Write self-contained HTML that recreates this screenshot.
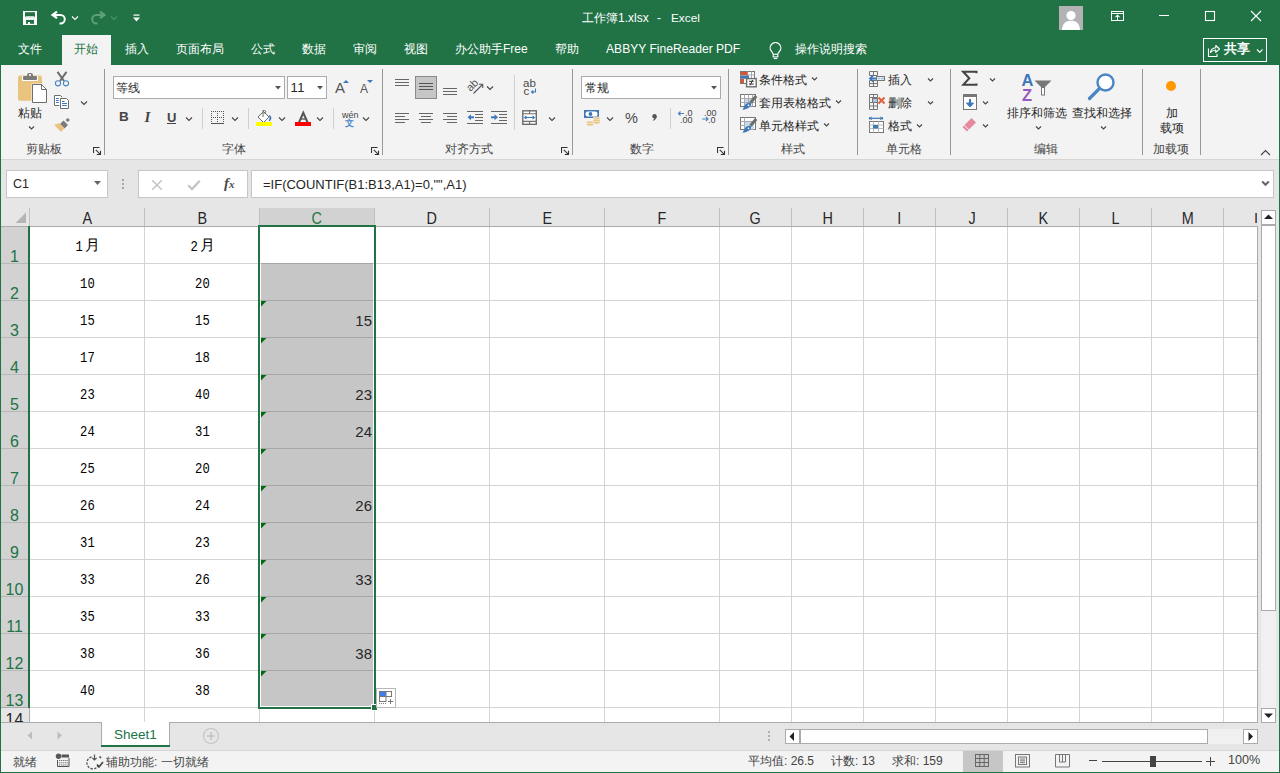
<!DOCTYPE html>
<html><head><meta charset="utf-8"><style>
html,body{margin:0;padding:0;width:1280px;height:773px;overflow:hidden;background:#f3f3f3}
body{position:relative;font-family:"Liberation Sans",sans-serif}
body>div,body>svg{position:absolute}
.t{white-space:nowrap}
.m{font-family:"Liberation Mono",monospace;font-size:14px;line-height:14px;color:#000}
.sx{display:inline-block;transform:scaleX(0.87)}
.hx{display:inline-block;transform:scaleX(0.9)}
.cj{font-family:"Liberation Sans",sans-serif;font-size:15px;display:inline-block;vertical-align:top;position:relative;top:-2px;left:1px}
</style></head><body>
<div style="left:0px;top:0px;width:1280px;height:65px;background:#217346;"></div>
<svg style="left:22px;top:10px;" width="16" height="16" viewBox="0 0 16 16"><rect x="1" y="1" width="2" height="14" fill="#fff"/><rect x="13" y="1" width="2" height="14" fill="#fff"/><rect x="1" y="1" width="14" height="1.2" fill="#fff"/><rect x="1" y="13.8" width="14" height="1.2" fill="#fff"/><rect x="1" y="7.2" width="14" height="2.7" fill="#fff"/><rect x="3" y="9.9" width="1" height="4" fill="#fff"/><rect x="12" y="9.9" width="1" height="4" fill="#fff"/><rect x="6" y="12" width="2" height="2" fill="#fff"/><path d="M3 7.2 L4 6.2 H12 L13 7.2 Z" fill="#fff"/></svg>
<svg style="left:50px;top:10px;" width="18" height="16" viewBox="0 0 18 16"><path d="M3 4.9 H10.5 A4.3 4.3 0 0 1 10.5 13.5 H9.5" fill="none" stroke="#fff" stroke-width="2"/><path d="M7 1.6 L2.6 4.9 L7 8.2" fill="none" stroke="#fff" stroke-width="2.3"/></svg>
<svg style="left:71px;top:15px;" width="8" height="6" viewBox="0 0 8 6"><path d="M1 1.5 L4.0 4.5 L7 1.5" fill="none" stroke="#fff" stroke-width="1.1"/></svg>
<svg style="left:89px;top:10px;" width="18" height="16" viewBox="0 0 18 16"><path d="M15 4.9 H7.5 A4.3 4.3 0 0 0 7.5 13.5 H8.5" fill="none" stroke="#5fa07a" stroke-width="2"/><path d="M11 1.6 L15.4 4.9 L11 8.2" fill="none" stroke="#5fa07a" stroke-width="2.3"/></svg>
<svg style="left:110px;top:15px;" width="8" height="6" viewBox="0 0 8 6"><path d="M1 1.5 L4.0 4.5 L7 1.5" fill="none" stroke="#4e9068" stroke-width="1.1"/></svg>
<svg style="left:132px;top:13px;" width="9" height="10" viewBox="0 0 9 10"><rect x="1.5" y="1.5" width="6" height="1.2" fill="#fff"/><path d="M1 4.5 H8 L4.5 8.5 Z" fill="#fff"/></svg>
<div class="t" style="left:582px;top:12px;font-size:12px;line-height:13px;color:#fff;">工作簿1.xlsx</div>
<div class="t" style="left:657px;top:12px;font-size:12px;line-height:13px;color:#fff;">-</div>
<div class="t" style="left:671px;top:12px;font-size:11.8px;line-height:13px;color:#fff;">Excel</div>
<div style="left:1059px;top:6px;width:24px;height:24px;background:#b3b3b3;"></div>
<svg style="left:1059px;top:6px;" width="24" height="24" viewBox="0 0 24 24"><circle cx="12" cy="9.5" r="4.6" fill="#fff"/><path d="M3 24 C3.5 17 7 14.8 12 14.8 C17 14.8 20.5 17 21 24 Z" fill="#fff"/></svg>
<svg style="left:1110px;top:10px;" width="16" height="13" viewBox="0 0 16 13"><rect x="1.5" y="1.5" width="12" height="9" fill="none" stroke="#fff" stroke-width="1"/><line x1="1.5" y1="3.5" x2="13.5" y2="3.5" stroke="#fff" stroke-width="1"/><path d="M7.5 10.5 V5" stroke="#fff" stroke-width="1"/><path d="M5.5 7.2 L7.5 5.2 L9.5 7.2" fill="none" stroke="#fff" stroke-width="1.1"/></svg>
<div style="left:1159px;top:15px;width:10px;height:1px;background:#fff;"></div>
<svg style="left:1204px;top:10px;" width="12" height="12" viewBox="0 0 12 12"><rect x="1.5" y="1.5" width="9" height="9" fill="none" stroke="#fff" stroke-width="1.1"/></svg>
<svg style="left:1250px;top:10px;" width="12" height="12" viewBox="0 0 12 12"><path d="M1 1 L11 11 M11 1 L1 11" stroke="#fff" stroke-width="1.1"/></svg>
<div style="left:62px;top:35px;width:49px;height:30px;background:#f3f3f3;"></div>
<div class="t" style="left:18px;top:43px;font-size:12px;line-height:12px;color:#fff;">文件</div>
<div class="t" style="left:74px;top:43px;font-size:12px;line-height:12px;color:#217346;">开始</div>
<div class="t" style="left:125px;top:43px;font-size:12px;line-height:12px;color:#fff;">插入</div>
<div class="t" style="left:176px;top:43px;font-size:12px;line-height:12px;color:#fff;">页面布局</div>
<div class="t" style="left:251px;top:43px;font-size:12px;line-height:12px;color:#fff;">公式</div>
<div class="t" style="left:302px;top:43px;font-size:12px;line-height:12px;color:#fff;">数据</div>
<div class="t" style="left:353px;top:43px;font-size:12px;line-height:12px;color:#fff;">审阅</div>
<div class="t" style="left:404px;top:43px;font-size:12px;line-height:12px;color:#fff;">视图</div>
<div class="t" style="left:455px;top:43px;font-size:12px;line-height:12px;color:#fff;">办公助手Free</div>
<div class="t" style="left:555px;top:43px;font-size:12px;line-height:12px;color:#fff;">帮助</div>
<div class="t" style="left:606px;top:42px;font-size:12.1px;line-height:14px;color:#fff;">ABBYY FineReader PDF</div>
<svg style="left:768px;top:42px;" width="15" height="18" viewBox="0 0 15 18"><path d="M5.3 12 L3.4 9.2 A5.3 5.3 0 1 1 11.6 9.2 L9.7 12" fill="none" stroke="#fff" stroke-width="1.2"/><rect x="5.2" y="12.3" width="4.6" height="2.6" fill="none" stroke="#fff" stroke-width="1.1"/><rect x="5.8" y="16" width="3.4" height="1.1" fill="#fff"/></svg>
<div class="t" style="left:795px;top:43px;font-size:12px;line-height:12px;color:#fff;">操作说明搜索</div>
<div style="left:1203px;top:38px;width:64px;height:24px;border:1px solid #fff;box-sizing:border-box;"></div>
<svg style="left:1206px;top:43px;" width="15" height="15" viewBox="0 0 15 15"><path d="M2.5 5.5 V13.5 H11 V11" fill="none" stroke="#fff" stroke-width="1.1"/><path d="M4.5 9.5 C4.8 6.5 7 5 9.8 4.8 V2.5 L13.5 6 L9.8 9.3 V7 C7.5 7 6 7.8 4.5 9.5 Z" fill="none" stroke="#fff" stroke-width="1.1" stroke-linejoin="round"/></svg>
<div class="t" style="left:1224px;top:42px;font-size:13px;line-height:13px;color:#fff;font-weight:bold;">共享</div>
<svg style="left:1256px;top:48px;" width="7.5" height="5" viewBox="0 0 7.5 5"><path d="M1 1.5 L3.75 4.3 L6.5 1.5" fill="none" stroke="#fff" stroke-width="1.1"/></svg>
<div style="left:0px;top:65px;width:1280px;height:94px;background:#f3f3f3;"></div>
<div style="left:0px;top:159px;width:1280px;height:1px;background:#d6d6d6;"></div>
<div style="left:104px;top:69px;width:1px;height:86px;background:#999999;"></div>
<div style="left:382px;top:69px;width:1px;height:86px;background:#999999;"></div>
<div style="left:572px;top:69px;width:1px;height:86px;background:#999999;"></div>
<div style="left:728px;top:69px;width:1px;height:86px;background:#999999;"></div>
<div style="left:857px;top:69px;width:1px;height:86px;background:#999999;"></div>
<div style="left:950px;top:69px;width:1px;height:86px;background:#999999;"></div>
<div style="left:1142px;top:69px;width:1px;height:86px;background:#999999;"></div>
<div style="left:1200px;top:69px;width:1px;height:86px;background:#999999;"></div>
<div class="t" style="left:26px;top:143px;font-size:12px;line-height:12px;color:#444;">剪贴板</div>
<div class="t" style="left:222px;top:143px;font-size:12px;line-height:12px;color:#444;">字体</div>
<div class="t" style="left:445px;top:143px;font-size:12px;line-height:12px;color:#444;">对齐方式</div>
<div class="t" style="left:630px;top:143px;font-size:12px;line-height:12px;color:#444;">数字</div>
<div class="t" style="left:781px;top:143px;font-size:12px;line-height:12px;color:#444;">样式</div>
<div class="t" style="left:886px;top:143px;font-size:12px;line-height:12px;color:#444;">单元格</div>
<div class="t" style="left:1034px;top:143px;font-size:12px;line-height:12px;color:#444;">编辑</div>
<div class="t" style="left:1153px;top:143px;font-size:12px;line-height:12px;color:#444;">加载项</div>
<svg style="left:93px;top:147px;" width="9" height="9" viewBox="0 0 9 9"><path d="M0.5 6 V0.5 H6.5 M2.8 2.8 L7.3 7.3 M7.5 3.8 V7.5 H3.8" fill="none" stroke="#333" stroke-width="1.1"/></svg>
<svg style="left:371px;top:147px;" width="9" height="9" viewBox="0 0 9 9"><path d="M0.5 6 V0.5 H6.5 M2.8 2.8 L7.3 7.3 M7.5 3.8 V7.5 H3.8" fill="none" stroke="#333" stroke-width="1.1"/></svg>
<svg style="left:561px;top:147px;" width="9" height="9" viewBox="0 0 9 9"><path d="M0.5 6 V0.5 H6.5 M2.8 2.8 L7.3 7.3 M7.5 3.8 V7.5 H3.8" fill="none" stroke="#333" stroke-width="1.1"/></svg>
<svg style="left:717px;top:147px;" width="9" height="9" viewBox="0 0 9 9"><path d="M0.5 6 V0.5 H6.5 M2.8 2.8 L7.3 7.3 M7.5 3.8 V7.5 H3.8" fill="none" stroke="#333" stroke-width="1.1"/></svg>
<svg style="left:1260px;top:149px;" width="11" height="7" viewBox="0 0 11 7"><path d="M1 6 L5.5 1.5 L10 6" fill="none" stroke="#444" stroke-width="1.1"/></svg>
<svg style="left:17px;top:72px;" width="31" height="32" viewBox="0 0 31 32"><rect x="1" y="3.6" width="24" height="25.2" rx="2" fill="#e9c47e"/><rect x="5" y="4" width="16" height="5" fill="#fff"/><rect x="6" y="4" width="14" height="4" rx="1" fill="#7a7a7a"/><rect x="10" y="1" width="6" height="4.5" rx="2.2" fill="#7a7a7a"/><circle cx="13" cy="3" r="1.1" fill="#fff"/><path d="M14.5 11.5 H25 L30.5 17 V31.5 H14.5 Z" fill="#f3f3f3"/><path d="M15.5 12.5 H24.5 L29.5 17.5 V30.5 H15.5 Z" fill="#fff" stroke="#6d6d6d" stroke-width="1"/><path d="M24.5 12.5 V17.5 H29.5" fill="none" stroke="#6d6d6d" stroke-width="1"/></svg>
<div class="t" style="left:18px;top:107px;font-size:12px;line-height:12px;color:#262626;">粘贴</div>
<svg style="left:28px;top:125px;" width="7" height="5" viewBox="0 0 7 5"><path d="M1 1.5 L3.5 4.0 L6 1.5" fill="none" stroke="#444" stroke-width="1.1"/></svg>
<svg style="left:54px;top:71px;" width="16" height="16" viewBox="0 0 16 16"><path d="M3.5 0.8 L10 10 M12.5 0.8 L6 10" stroke="#6d6d6d" stroke-width="2"/><circle cx="4" cy="12.3" r="2.6" fill="#f3f3f3" stroke="#4a86c5" stroke-width="1.1"/><circle cx="12" cy="12.3" r="2.6" fill="#f3f3f3" stroke="#4a86c5" stroke-width="1.1"/></svg>
<svg style="left:50px;top:90px;" width="24" height="22" viewBox="0 0 24 22"><path d="M4.5 5.5 H10.5 L12 7 V15.5 H4.5 Z" fill="#fff" stroke="#6d6d6d" stroke-width="1"/><path d="M10.5 8.5 H16.5 L18.5 10.5 V18.5 H10.5 Z" fill="#fff" stroke="#f3f3f3" stroke-width="2.5"/><path d="M10.5 8.5 H16.5 L18.5 10.5 V18.5 H10.5 Z" fill="#fff" stroke="#6d6d6d" stroke-width="1"/><path d="M6 8.5 H8.8 M6 10.5 H8.8 M6 12.5 H8.8 M12 11.5 H14.5 M12 13.5 H17 M12 15.5 H17" stroke="#3e78b9" stroke-width="1"/></svg>
<svg style="left:80px;top:100px;" width="8" height="6" viewBox="0 0 8 6"><path d="M1 1.5 L4.0 4.5 L7 1.5" fill="none" stroke="#444" stroke-width="1.1"/></svg>
<svg style="left:50px;top:116px;" width="24" height="20" viewBox="0 0 24 20"><polygon points="15.6,4 17.8,1.9 19.9,4 17.8,6.1" fill="#7a7a7a"/><polygon points="10,8 13.5,4.5 18,9 14.5,12.5" fill="#7a7a7a"/><polygon points="4,8.8 9.5,7.3 14.5,12.3 11,16" fill="#e9c47e"/></svg>
<div style="left:113px;top:76px;width:172px;height:23px;background:#fff;border:1px solid #ababab;box-sizing:border-box;"></div>
<div class="t" style="left:116px;top:82px;font-size:12px;line-height:12px;color:#262626;">等线</div>
<svg style="left:275px;top:86px;" width="6" height="4" viewBox="0 0 6 4"><path d="M0 0 H6 L3 3.5 Z" fill="#555"/></svg>
<div style="left:287px;top:76px;width:40px;height:23px;background:#fff;border:1px solid #ababab;box-sizing:border-box;"></div>
<div class="t" style="left:290.5px;top:81px;font-size:13px;line-height:13px;color:#262626;letter-spacing:0.5px;">11</div>
<svg style="left:317px;top:86px;" width="6" height="4" viewBox="0 0 6 4"><path d="M0 0 H6 L3 3.5 Z" fill="#555"/></svg>
<div class="t" style="left:335px;top:80px;font-size:15px;line-height:15px;color:#555;">A</div>
<svg style="left:343px;top:80px;" width="6" height="4" viewBox="0 0 6 4"><path d="M0 3 L3 0 L6 3 Z" fill="#3e78b9"/></svg>
<div class="t" style="left:360px;top:83px;font-size:12px;line-height:12px;color:#555;">A</div>
<svg style="left:366.5px;top:80px;" width="6" height="4" viewBox="0 0 6 4"><path d="M0 0 H6 L3 3 Z" fill="#3e78b9"/></svg>
<div class="t" style="left:119px;top:110px;font-size:13.5px;line-height:14px;color:#444;font-weight:bold;">B</div>
<div class="t" style="left:144.5px;top:110px;font-size:15px;line-height:15px;color:#444;font-family:'Liberation Serif';font-style:italic;font-weight:bold;">I</div>
<div class="t" style="left:167px;top:111px;font-size:13px;line-height:13px;color:#444;font-weight:bold;">U</div>
<div style="left:167px;top:123px;width:9px;height:1px;background:#444;"></div>
<svg style="left:185px;top:116px;" width="8" height="6" viewBox="0 0 8 6"><path d="M1 1.5 L4.0 4.5 L7 1.5" fill="none" stroke="#444" stroke-width="1.1"/></svg>
<div style="left:202px;top:108px;width:1px;height:21px;background:#d0d0d0;"></div>
<svg style="left:211px;top:110px;" width="14" height="15" viewBox="0 0 14 15"><g fill="#555"><rect x="0" y="1" width="1" height="1"/><rect x="0" y="11" width="1" height="1"/><rect x="0" y="3" width="1" height="1"/><rect x="0" y="5" width="1" height="1"/><rect x="0" y="7" width="1" height="1"/><rect x="0" y="9" width="1" height="1"/><rect x="10" y="1" width="1" height="1"/><rect x="10" y="7" width="1" height="1"/><rect x="12" y="1" width="1" height="1"/><rect x="12" y="11" width="1" height="1"/><rect x="12" y="3" width="1" height="1"/><rect x="12" y="5" width="1" height="1"/><rect x="12" y="7" width="1" height="1"/><rect x="12" y="9" width="1" height="1"/><rect x="2" y="1" width="1" height="1"/><rect x="2" y="7" width="1" height="1"/><rect x="4" y="1" width="1" height="1"/><rect x="4" y="7" width="1" height="1"/><rect x="6" y="1" width="1" height="1"/><rect x="6" y="11" width="1" height="1"/><rect x="6" y="3" width="1" height="1"/><rect x="6" y="5" width="1" height="1"/><rect x="6" y="7" width="1" height="1"/><rect x="6" y="9" width="1" height="1"/><rect x="8" y="1" width="1" height="1"/><rect x="8" y="7" width="1" height="1"/></g><rect x="0" y="13" width="13" height="1" fill="#555"/></svg>
<svg style="left:231px;top:116px;" width="8" height="6" viewBox="0 0 8 6"><path d="M1 1.5 L4.0 4.5 L7 1.5" fill="none" stroke="#444" stroke-width="1.1"/></svg>
<div style="left:248px;top:108px;width:1px;height:21px;background:#d0d0d0;"></div>
<svg style="left:255px;top:109px;" width="18" height="18" viewBox="0 0 18 18"><path d="M8.5 2.5 L14 8 L8.5 13.5 L3 8 Z" fill="#fff" stroke="#6d6d6d" stroke-width="1"/><path d="M8 8 V1.5 H9.5 C11 1.5 11 4 9.5 4 H8.5" fill="none" stroke="#6d6d6d" stroke-width="1"/><path d="M13.8 12 C14.5 10 15 8 13.8 6 C16.5 6.5 17.5 9.5 14.8 12.2 Z" fill="#3e78b9"/><rect x="1" y="13" width="16" height="4" fill="#ffff00"/></svg>
<svg style="left:278px;top:116px;" width="8" height="6" viewBox="0 0 8 6"><path d="M1 1.5 L4.0 4.5 L7 1.5" fill="none" stroke="#444" stroke-width="1.1"/></svg>
<svg style="left:294px;top:110px;" width="18" height="13" viewBox="0 0 18 13"><path d="M5 12.5 L9.3 2.8 L13.6 12.5" fill="none" stroke="#555" stroke-width="2" stroke-linejoin="miter"/><path d="M6.5 9 H12" stroke="#555" stroke-width="1.3"/></svg>
<div style="left:295px;top:122px;width:16px;height:4px;background:#ff0000;"></div>
<svg style="left:316px;top:116px;" width="8" height="6" viewBox="0 0 8 6"><path d="M1 1.5 L4.0 4.5 L7 1.5" fill="none" stroke="#444" stroke-width="1.1"/></svg>
<div style="left:333px;top:108px;width:1px;height:21px;background:#d0d0d0;"></div>
<div class="t" style="left:342px;top:111px;font-size:9px;line-height:9px;color:#444;">wén</div>
<div class="t" style="left:345px;top:119px;font-size:9px;line-height:9px;color:#4a86c5;font-weight:bold;">文</div>
<svg style="left:362px;top:116px;" width="8" height="6" viewBox="0 0 8 6"><path d="M1 1.5 L4.0 4.5 L7 1.5" fill="none" stroke="#444" stroke-width="1.1"/></svg>
<div style="left:395px;top:79px;width:14px;height:1px;background:#666;"></div>
<div style="left:395px;top:82px;width:14px;height:1px;background:#666;"></div>
<div style="left:395px;top:85px;width:14px;height:1px;background:#666;"></div>
<div style="left:415px;top:76px;width:22px;height:23px;background:#c6c6c6;border:1px solid #8a8a8a;box-sizing:border-box;"></div>
<div style="left:419px;top:83px;width:14px;height:1px;background:#555;"></div>
<div style="left:419px;top:86px;width:14px;height:1px;background:#555;"></div>
<div style="left:419px;top:89px;width:14px;height:1px;background:#555;"></div>
<div style="left:443px;top:88px;width:14px;height:1px;background:#666;"></div>
<div style="left:443px;top:91px;width:14px;height:1px;background:#666;"></div>
<div style="left:443px;top:94px;width:14px;height:1px;background:#666;"></div>
<svg style="left:465px;top:77px;" width="20" height="19" viewBox="0 0 20 19"><text x="0" y="0" font-size="11" font-family="Liberation Sans" fill="#555" transform="translate(5.5 15) rotate(-45)">ab</text><path d="M8.5 16.5 L17.5 7.5" stroke="#555" stroke-width="1.1"/><path d="M14 7.3 H17.7 V11" fill="none" stroke="#555" stroke-width="1.1"/></svg>
<svg style="left:486px;top:85px;" width="8" height="6" viewBox="0 0 8 6"><path d="M1 1.5 L4.0 4.5 L7 1.5" fill="none" stroke="#444" stroke-width="1.1"/></svg>
<div style="left:514px;top:75px;width:1px;height:55px;background:#d0d0d0;"></div>
<div class="t" style="left:523px;top:78px;font-size:11.5px;line-height:11px;color:#4a4a4a;">ab</div>
<div class="t" style="left:523.5px;top:86px;font-size:11.5px;line-height:11px;color:#4a4a4a;">c</div>
<svg style="left:530px;top:88px;" width="7" height="7" viewBox="0 0 7 7"><path d="M5.5 0.5 V4 H2 M3.3 2.5 L1.5 4 L3.3 5.5" fill="none" stroke="#3e78b9" stroke-width="1.1"/></svg>
<div style="left:395px;top:113px;width:14px;height:1px;background:#666;"></div>
<div style="left:395px;top:116px;width:10px;height:1px;background:#666;"></div>
<div style="left:395px;top:119px;width:14px;height:1px;background:#666;"></div>
<div style="left:395px;top:122px;width:10px;height:1px;background:#666;"></div>
<div style="left:419px;top:113px;width:14px;height:1px;background:#666;"></div>
<div style="left:421px;top:116px;width:10px;height:1px;background:#666;"></div>
<div style="left:419px;top:119px;width:14px;height:1px;background:#666;"></div>
<div style="left:421px;top:122px;width:10px;height:1px;background:#666;"></div>
<div style="left:443px;top:113px;width:14px;height:1px;background:#666;"></div>
<div style="left:447px;top:116px;width:10px;height:1px;background:#666;"></div>
<div style="left:443px;top:119px;width:14px;height:1px;background:#666;"></div>
<div style="left:447px;top:122px;width:10px;height:1px;background:#666;"></div>
<svg style="left:467px;top:110px;" width="17" height="15" viewBox="0 0 17 15"><path d="M0 1.5 H16 M8 4.5 H16 M8 7.5 H16 M8 10.5 H16 M0 13.5 H16" stroke="#666" stroke-width="1"/><path d="M7 7.3 H3" stroke="#3e78b9" stroke-width="2"/><path d="M0.5 7.3 L4 4.3 V10.3 Z" fill="#3e78b9"/></svg>
<svg style="left:491px;top:110px;" width="17" height="15" viewBox="0 0 17 15"><path d="M0 1.5 H16 M8 4.5 H16 M8 7.5 H16 M8 10.5 H16 M0 13.5 H16" stroke="#666" stroke-width="1"/><path d="M0 7.3 H4" stroke="#3e78b9" stroke-width="2"/><path d="M7 7.3 L3.5 4.3 V10.3 Z" fill="#3e78b9"/></svg>
<svg style="left:521px;top:109px;" width="17" height="17" viewBox="0 0 17 17"><rect x="1.8" y="1.8" width="13.5" height="13.5" fill="#fff" stroke="#6d6d6d" stroke-width="1.4"/><path d="M1.5 4.7 H15.5 M1.5 12.4 H15.5 M8.6 1.5 V4.7 M8.6 12.4 V15.5" stroke="#6d6d6d" stroke-width="1.1"/><path d="M4 8.5 H13 " stroke="#3e78b9" stroke-width="1.1"/><path d="M5.5 6.8 L3.6 8.5 L5.5 10.2 M11.5 6.8 L13.4 8.5 L11.5 10.2" fill="none" stroke="#3e78b9" stroke-width="1.1"/></svg>
<svg style="left:548px;top:116px;" width="8" height="6" viewBox="0 0 8 6"><path d="M1 1.5 L4.0 4.5 L7 1.5" fill="none" stroke="#444" stroke-width="1.1"/></svg>
<div style="left:581px;top:76px;width:140px;height:23px;background:#fff;border:1px solid #ababab;box-sizing:border-box;"></div>
<div class="t" style="left:585px;top:82px;font-size:12px;line-height:12px;color:#262626;">常规</div>
<svg style="left:711px;top:86px;" width="6" height="4" viewBox="0 0 6 4"><path d="M0 0 H6 L3 3.5 Z" fill="#555"/></svg>
<svg style="left:583px;top:109px;" width="18" height="18" viewBox="0 0 18 18"><rect x="1" y="1" width="15" height="8" fill="#3e78b9"/><rect x="2.5" y="2.5" width="12" height="5" rx="2.2" fill="#fff"/><circle cx="7.5" cy="5" r="1.9" fill="#3e78b9"/><g fill="#e9c47e" stroke="#f3f3f3" stroke-width="0.6"><ellipse cx="13.5" cy="9.2" rx="3.6" ry="1.4"/><ellipse cx="13.5" cy="11.4" rx="3.6" ry="1.4"/><ellipse cx="13.5" cy="13.6" rx="3.6" ry="1.4"/><ellipse cx="7" cy="13.4" rx="3.6" ry="1.4"/><ellipse cx="7" cy="15.6" rx="3.6" ry="1.4"/></g></svg>
<svg style="left:606px;top:116px;" width="8" height="6" viewBox="0 0 8 6"><path d="M1 1.5 L4.0 4.5 L7 1.5" fill="none" stroke="#444" stroke-width="1.1"/></svg>
<div class="t" style="left:625px;top:111px;font-size:14.5px;line-height:14px;color:#4a4a4a;">%</div>
<svg style="left:650px;top:112px;" width="9" height="10" viewBox="0 0 9 10"><circle cx="4.5" cy="4.2" r="2.2" fill="#555"/><path d="M6.6 4 C6.8 6.2 5.8 7.8 3.2 8.8 L2.8 8 C4.3 7.2 4.8 6.3 4.6 5.2 Z" fill="#555"/></svg>
<div style="left:670px;top:108px;width:1px;height:21px;background:#d0d0d0;"></div>
<svg style="left:677px;top:110px;" width="16" height="15" viewBox="0 0 16 15"><path d="M7 3.5 H1.5 M3.5 1.5 L1.5 3.5 L3.5 5.5" fill="none" stroke="#4a86c5" stroke-width="1.2"/></svg>
<div class="t" style="left:685px;top:109px;font-size:9px;line-height:9px;color:#444;">.0</div>
<div class="t" style="left:680px;top:116px;font-size:9px;line-height:9px;color:#444;">.00</div>
<div class="t" style="left:704px;top:109px;font-size:9px;line-height:9px;color:#444;">.00</div>
<svg style="left:701px;top:115px;" width="8" height="8" viewBox="0 0 8 8"><path d="M1 4 H7 M5 2 L7 4 L5 6" fill="none" stroke="#4a86c5" stroke-width="1.2"/></svg>
<div class="t" style="left:708px;top:116px;font-size:9px;line-height:9px;color:#444;">.0</div>
<svg style="left:739px;top:70px;" width="19" height="18" viewBox="0 0 19 18"><rect x="1.5" y="1.5" width="14" height="12" fill="#fff" stroke="#777"/><path d="M8.5 1.5 V13.5 M12.5 1.5 V13.5 M1.5 5 H15.5 M1.5 8.5 H15.5" stroke="#aaa"/><rect x="2" y="2" width="6.5" height="3" fill="#e0532f"/><rect x="2" y="5.5" width="8" height="3" fill="#3e78b9"/><rect x="2" y="9" width="3" height="4" fill="#e0532f"/><rect x="7.6" y="8.6" width="9.6" height="8.2" fill="#fff" stroke="#6d6d6d" stroke-width="1.4"/><path d="M10 11.3 H14.8 M10 14 H14.8 M13.6 10 L11.2 15.3" stroke="#333" stroke-width="1"/></svg>
<div class="t" style="left:759px;top:74px;font-size:12px;line-height:12px;color:#262626;">条件格式</div>
<svg style="left:811px;top:76px;" width="7" height="5" viewBox="0 0 7 5"><path d="M1 1.5 L3.5 4.0 L6 1.5" fill="none" stroke="#444" stroke-width="1.1"/></svg>
<svg style="left:739px;top:93px;" width="19" height="18" viewBox="0 0 19 18"><rect x="1.5" y="1.5" width="15" height="12" fill="#fff" stroke="#777"/><rect x="5.5" y="5.5" width="7" height="8" fill="#c5d9ef"/><path d="M5.5 1.5 V13.5 M9.5 1.5 V13.5 M13.5 1.5 V13.5 M1.5 5.5 H16.5 M1.5 9.5 H16.5" stroke="#aaa"/><path d="M17.2 3 L11.5 9.8" stroke="#6d6d6d" stroke-width="3"/><path d="M11.5 10 C9.5 9.3 7.2 10.3 5.8 12.5 L3.5 16.8 C6.3 16.8 9.5 15.6 11.3 13.6 C12.3 12.5 12.4 11 11.5 10 Z" fill="#3e78b9"/><circle cx="9.5" cy="12.3" r="0.9" fill="#fff"/></svg>
<div class="t" style="left:759px;top:97px;font-size:12px;line-height:12px;color:#262626;">套用表格格式</div>
<svg style="left:835px;top:99px;" width="7" height="5" viewBox="0 0 7 5"><path d="M1 1.5 L3.5 4.0 L6 1.5" fill="none" stroke="#444" stroke-width="1.1"/></svg>
<svg style="left:739px;top:116px;" width="19" height="18" viewBox="0 0 19 18"><rect x="1.5" y="1.5" width="15" height="12" fill="#fff" stroke="#777"/><path d="M1.5 5.5 H16.5 M1.5 9.5 H5.5 M5.5 1.5 V13.5" stroke="#aaa"/><rect x="6" y="6" width="9" height="7.5" fill="#c5d9ef"/><path d="M17.2 3 L11.5 9.8" stroke="#6d6d6d" stroke-width="3"/><path d="M11.5 10 C9.5 9.3 7.2 10.3 5.8 12.5 L3.5 16.8 C6.3 16.8 9.5 15.6 11.3 13.6 C12.3 12.5 12.4 11 11.5 10 Z" fill="#3e78b9"/><circle cx="9.5" cy="12.3" r="0.9" fill="#fff"/></svg>
<div class="t" style="left:759px;top:120px;font-size:12px;line-height:12px;color:#262626;">单元格样式</div>
<svg style="left:823px;top:122px;" width="7" height="5" viewBox="0 0 7 5"><path d="M1 1.5 L3.5 4.0 L6 1.5" fill="none" stroke="#444" stroke-width="1.1"/></svg>
<svg style="left:868px;top:70px;" width="18" height="18" viewBox="0 0 18 18"><path d="M1.5 1.5 H9.5 V5.5 H1.5 Z M5.5 1.5 V5.5 M1.5 10.5 H9.5 V16.5 H1.5 Z M1.5 13.5 H9.5 M5.5 10.5 V16.5" fill="none" stroke="#777"/><rect x="8.5" y="6.5" width="8" height="4" fill="#fff" stroke="#777"/><rect x="9.5" y="7.5" width="3" height="2" fill="#a9c8e8"/><rect x="13" y="7.5" width="3" height="2" fill="#a9c8e8"/><path d="M8 8.5 H2.5" stroke="#3e78b9" stroke-width="2"/><path d="M5.2 5.3 L2 8.5 L5.2 11.7" fill="none" stroke="#3e78b9" stroke-width="1.8"/></svg>
<div class="t" style="left:888px;top:74px;font-size:12px;line-height:12px;color:#262626;">插入</div>
<svg style="left:927px;top:77px;" width="7" height="5" viewBox="0 0 7 5"><path d="M1 1.5 L3.5 4.0 L6 1.5" fill="none" stroke="#444" stroke-width="1.1"/></svg>
<svg style="left:868px;top:93px;" width="18" height="18" viewBox="0 0 18 18"><path d="M1.5 1.5 H9.5 V4.5 H1.5 Z M5.5 1.5 V4.5 M1.5 9.5 H9.5 V16.5 H1.5 Z M1.5 13 H9.5 M5.5 9.5 V16.5 M1.5 4.5 V9.5" fill="none" stroke="#777"/><rect x="4.5" y="5.5" width="5" height="4" fill="#a9c8e8" stroke="#777"/><path d="M10.5 4.5 L16.5 10.5 M16.5 4.5 L10.5 10.5" stroke="#e0613f" stroke-width="2"/></svg>
<div class="t" style="left:888px;top:97px;font-size:12px;line-height:12px;color:#262626;">删除</div>
<svg style="left:927px;top:100px;" width="7" height="5" viewBox="0 0 7 5"><path d="M1 1.5 L3.5 4.0 L6 1.5" fill="none" stroke="#444" stroke-width="1.1"/></svg>
<svg style="left:868px;top:116px;" width="18" height="18" viewBox="0 0 18 18"><path d="M1.5 1 V3.5 M14.5 1 V3.5" stroke="#3e78b9"/><path d="M2 2.3 H14" stroke="#3e78b9" stroke-width="1.2"/><path d="M3.8 0.8 L2 2.3 L3.8 3.8 M12.2 0.8 L14 2.3 L12.2 3.8" fill="none" stroke="#3e78b9" stroke-width="1"/><rect x="1.5" y="5.5" width="14" height="11" fill="#fff" stroke="#777"/><path d="M1.5 9 H15.5 M1.5 12.5 H15.5 M5.5 5.5 V16.5 M10.5 5.5 V16.5" stroke="#bbb"/><rect x="5" y="9" width="5" height="3.5" fill="#3e78b9"/></svg>
<div class="t" style="left:888px;top:120px;font-size:12px;line-height:12px;color:#262626;">格式</div>
<svg style="left:916px;top:123px;" width="7" height="5" viewBox="0 0 7 5"><path d="M1 1.5 L3.5 4.0 L6 1.5" fill="none" stroke="#444" stroke-width="1.1"/></svg>
<svg style="left:961px;top:70px;" width="17" height="17" viewBox="0 0 17 17"><path d="M15.5 3.2 V1.8 H2.2 L8.3 8.3 L2.2 14.8 H15.5 V13.4" fill="none" stroke="#444" stroke-width="2" stroke-linejoin="miter"/></svg>
<svg style="left:989px;top:77px;" width="7" height="5" viewBox="0 0 7 5"><path d="M1 1.5 L3.5 4.0 L6 1.5" fill="none" stroke="#444" stroke-width="1.1"/></svg>
<svg style="left:962px;top:93px;" width="16" height="18" viewBox="0 0 16 18"><rect x="1.5" y="1.5" width="13" height="15" fill="#fff" stroke="#777"/><rect x="1" y="1" width="14" height="3" fill="#777"/><path d="M8 6 V12" stroke="#3e78b9" stroke-width="2"/><path d="M4.5 10 L8 14 L11.5 10 Z" fill="#3e78b9" stroke="#3e78b9" stroke-width="1"/></svg>
<svg style="left:982px;top:100px;" width="7" height="5" viewBox="0 0 7 5"><path d="M1 1.5 L3.5 4.0 L6 1.5" fill="none" stroke="#444" stroke-width="1.1"/></svg>
<svg style="left:962px;top:117px;" width="15" height="15" viewBox="0 0 15 15"><path d="M9.5 1 L14 5.5 L7 12.5 L2.5 8 Z" fill="#e58a9e"/><path d="M2 8.5 L6.5 13 L5 14.5 L0.5 10 Z" fill="#e58a9e"/></svg>
<svg style="left:982px;top:123px;" width="7" height="5" viewBox="0 0 7 5"><path d="M1 1.5 L3.5 4.0 L6 1.5" fill="none" stroke="#444" stroke-width="1.1"/></svg>
<div class="t" style="left:1021.5px;top:72px;font-size:16.5px;line-height:16px;color:#3e78b9;font-weight:bold;">A</div>
<div class="t" style="left:1022px;top:87px;font-size:16.5px;line-height:16px;color:#9b59c0;font-weight:bold;">Z</div>
<svg style="left:1034px;top:80px;" width="18" height="16" viewBox="0 0 18 16"><path d="M0.5 0.5 H17.5 L11 7 V15.5 H7 V7 Z" fill="#777"/><path d="M8 8 V14.5 H10 V8" fill="#fff"/></svg>
<div class="t" style="left:1007px;top:107px;font-size:12px;line-height:12px;color:#262626;">排序和筛选</div>
<svg style="left:1035px;top:125px;" width="7" height="5" viewBox="0 0 7 5"><path d="M1 1.5 L3.5 4.0 L6 1.5" fill="none" stroke="#444" stroke-width="1.1"/></svg>
<svg style="left:1087px;top:72px;" width="30" height="30" viewBox="0 0 30 30"><circle cx="18.5" cy="10.5" r="8" fill="#fff" stroke="#4a86c5" stroke-width="2.4"/><path d="M12.5 16.5 L2.5 26.5" stroke="#4a86c5" stroke-width="3.2" stroke-linecap="round"/></svg>
<div class="t" style="left:1072px;top:107px;font-size:12px;line-height:12px;color:#262626;">查找和选择</div>
<svg style="left:1100px;top:125px;" width="7" height="5" viewBox="0 0 7 5"><path d="M1 1.5 L3.5 4.0 L6 1.5" fill="none" stroke="#444" stroke-width="1.1"/></svg>
<svg style="left:1165px;top:80px;" width="12" height="12" viewBox="0 0 12 12"><circle cx="6" cy="6" r="5" fill="#ff9900"/></svg>
<div class="t" style="left:1166px;top:107px;font-size:12px;line-height:12px;color:#262626;">加</div>
<div class="t" style="left:1160px;top:122px;font-size:12px;line-height:12px;color:#262626;">载项</div>
<div style="left:0px;top:160px;width:1280px;height:48px;background:#e6e6e6;"></div>
<div style="left:6px;top:170px;width:102px;height:28px;background:#fff;border:1px solid #c6c6c6;box-sizing:border-box;"></div>
<div class="t" style="left:13px;top:178px;font-size:12.5px;line-height:13px;color:#262626;">C1</div>
<svg style="left:94px;top:181px;" width="8" height="5" viewBox="0 0 8 5"><path d="M0 0 H7 L3.5 4 Z" fill="#666"/></svg>
<div style="left:122px;top:179px;width:2px;height:2px;background:#a8a8a8;"></div>
<div style="left:122px;top:183px;width:2px;height:2px;background:#a8a8a8;"></div>
<div style="left:122px;top:187px;width:2px;height:2px;background:#a8a8a8;"></div>
<div style="left:138px;top:170px;width:110px;height:28px;background:#fff;border:1px solid #c6c6c6;box-sizing:border-box;"></div>
<svg style="left:151px;top:179px;" width="12" height="12" viewBox="0 0 12 12"><path d="M1.2 1.2 L10.8 10.8 M10.8 1.2 L1.2 10.8" stroke="#c4c4c4" stroke-width="1.6"/></svg>
<svg style="left:187px;top:179px;" width="14" height="12" viewBox="0 0 14 12"><path d="M1.2 6.3 L5 10 L12.8 1.8" fill="none" stroke="#c4c4c4" stroke-width="2.3"/></svg>
<div class="t" style="left:224px;top:175.5px;font-size:15px;line-height:14px;color:#4d4d4d;font-family:'Liberation Serif';font-weight:bold;"><i>f</i><span style="font-size:11px"><i>x</i></span></div>
<div style="left:251px;top:170px;width:1023px;height:28px;background:#fff;border:1px solid #c6c6c6;box-sizing:border-box;"></div>
<div class="t" style="left:263px;top:177px;font-size:13px;line-height:15px;color:#262626;">=IF(COUNTIF(B1:B13,A1)=0,"",A1)</div>
<svg style="left:1261px;top:180px;" width="9" height="7" viewBox="0 0 9 7"><path d="M1.2 1.5 L4.5 4.8 L7.8 1.5" fill="none" stroke="#666" stroke-width="2"/></svg>
<div style="left:0px;top:208px;width:1261px;height:19px;background:#e6e6e6;"></div>
<div style="left:0px;top:227px;width:1261px;height:495px;background:#fff;"></div>
<div style="left:260px;top:208px;width:114px;height:18px;background:#d2d2d2;"></div>
<div style="left:0px;top:227px;width:29px;height:495px;background:#e6e6e6;"></div>
<div style="left:0px;top:227px;width:28px;height:481px;background:#d2d2d2;"></div>
<svg style="left:15px;top:212px;" width="12" height="12" viewBox="0 0 12 12"><path d="M11 0.6 V11 H0.6 Z" fill="#b4b4b4"/></svg>
<div style="left:0px;top:226px;width:1258px;height:1px;background:#ababab;"></div>
<div style="left:29px;top:208px;width:1px;height:18px;background:#c0c0c0;"></div>
<div style="left:144px;top:208px;width:1px;height:18px;background:#c0c0c0;"></div>
<div style="left:259px;top:208px;width:1px;height:18px;background:#c0c0c0;"></div>
<div style="left:374px;top:208px;width:1px;height:18px;background:#c0c0c0;"></div>
<div style="left:489px;top:208px;width:1px;height:18px;background:#c0c0c0;"></div>
<div style="left:604px;top:208px;width:1px;height:18px;background:#c0c0c0;"></div>
<div style="left:719px;top:208px;width:1px;height:18px;background:#c0c0c0;"></div>
<div style="left:791px;top:208px;width:1px;height:18px;background:#c0c0c0;"></div>
<div style="left:863px;top:208px;width:1px;height:18px;background:#c0c0c0;"></div>
<div style="left:935px;top:208px;width:1px;height:18px;background:#c0c0c0;"></div>
<div style="left:1007px;top:208px;width:1px;height:18px;background:#c0c0c0;"></div>
<div style="left:1079px;top:208px;width:1px;height:18px;background:#c0c0c0;"></div>
<div style="left:1151px;top:208px;width:1px;height:18px;background:#c0c0c0;"></div>
<div style="left:1223px;top:208px;width:1px;height:18px;background:#c0c0c0;"></div>
<div class="t" style="left:30px;top:211px;width:114px;font-size:16px;line-height:15px;color:#262626;text-align:center"><span class="hx">A</span></div>
<div class="t" style="left:145px;top:211px;width:114px;font-size:16px;line-height:15px;color:#262626;text-align:center"><span class="hx">B</span></div>
<div class="t" style="left:260px;top:211px;width:114px;font-size:16px;line-height:15px;color:#217346;text-align:center"><span class="hx">C</span></div>
<div class="t" style="left:375px;top:211px;width:114px;font-size:16px;line-height:15px;color:#262626;text-align:center"><span class="hx">D</span></div>
<div class="t" style="left:490px;top:211px;width:114px;font-size:16px;line-height:15px;color:#262626;text-align:center"><span class="hx">E</span></div>
<div class="t" style="left:605px;top:211px;width:114px;font-size:16px;line-height:15px;color:#262626;text-align:center"><span class="hx">F</span></div>
<div class="t" style="left:720px;top:211px;width:71px;font-size:16px;line-height:15px;color:#262626;text-align:center"><span class="hx">G</span></div>
<div class="t" style="left:792px;top:211px;width:71px;font-size:16px;line-height:15px;color:#262626;text-align:center"><span class="hx">H</span></div>
<div class="t" style="left:864px;top:211px;width:71px;font-size:16px;line-height:15px;color:#262626;text-align:center"><span class="hx">I</span></div>
<div class="t" style="left:936px;top:211px;width:71px;font-size:16px;line-height:15px;color:#262626;text-align:center"><span class="hx">J</span></div>
<div class="t" style="left:1008px;top:211px;width:71px;font-size:16px;line-height:15px;color:#262626;text-align:center"><span class="hx">K</span></div>
<div class="t" style="left:1080px;top:211px;width:71px;font-size:16px;line-height:15px;color:#262626;text-align:center"><span class="hx">L</span></div>
<div class="t" style="left:1152px;top:211px;width:71px;font-size:16px;line-height:15px;color:#262626;text-align:center"><span class="hx">M</span></div>
<div class="t" style="left:1224px;top:211px;width:34px;font-size:14.67px;line-height:15px;color:#262626;text-align:center;overflow:hidden;height:15px;clip-path:inset(0 0 0 0)"></div>
<div class="t" style="left:1254px;top:211px;font-size:14.67px;line-height:15px;color:#262626;clip-path:inset(0 0 0 0);width:3px;overflow:hidden;">I</div>
<div style="left:144px;top:227px;width:1px;height:495px;background:#d4d4d4;"></div>
<div style="left:259px;top:227px;width:1px;height:495px;background:#d4d4d4;"></div>
<div style="left:374px;top:227px;width:1px;height:495px;background:#d4d4d4;"></div>
<div style="left:489px;top:227px;width:1px;height:495px;background:#d4d4d4;"></div>
<div style="left:604px;top:227px;width:1px;height:495px;background:#d4d4d4;"></div>
<div style="left:719px;top:227px;width:1px;height:495px;background:#d4d4d4;"></div>
<div style="left:791px;top:227px;width:1px;height:495px;background:#d4d4d4;"></div>
<div style="left:863px;top:227px;width:1px;height:495px;background:#d4d4d4;"></div>
<div style="left:935px;top:227px;width:1px;height:495px;background:#d4d4d4;"></div>
<div style="left:1007px;top:227px;width:1px;height:495px;background:#d4d4d4;"></div>
<div style="left:1079px;top:227px;width:1px;height:495px;background:#d4d4d4;"></div>
<div style="left:1151px;top:227px;width:1px;height:495px;background:#d4d4d4;"></div>
<div style="left:1223px;top:227px;width:1px;height:495px;background:#d4d4d4;"></div>
<div style="left:30px;top:263px;width:1227px;height:1px;background:#d4d4d4;"></div>
<div style="left:0px;top:263px;width:29px;height:1px;background:#b8b8b8;"></div>
<div style="left:30px;top:300px;width:1227px;height:1px;background:#d4d4d4;"></div>
<div style="left:0px;top:300px;width:29px;height:1px;background:#b8b8b8;"></div>
<div style="left:30px;top:337px;width:1227px;height:1px;background:#d4d4d4;"></div>
<div style="left:0px;top:337px;width:29px;height:1px;background:#b8b8b8;"></div>
<div style="left:30px;top:374px;width:1227px;height:1px;background:#d4d4d4;"></div>
<div style="left:0px;top:374px;width:29px;height:1px;background:#b8b8b8;"></div>
<div style="left:30px;top:411px;width:1227px;height:1px;background:#d4d4d4;"></div>
<div style="left:0px;top:411px;width:29px;height:1px;background:#b8b8b8;"></div>
<div style="left:30px;top:448px;width:1227px;height:1px;background:#d4d4d4;"></div>
<div style="left:0px;top:448px;width:29px;height:1px;background:#b8b8b8;"></div>
<div style="left:30px;top:485px;width:1227px;height:1px;background:#d4d4d4;"></div>
<div style="left:0px;top:485px;width:29px;height:1px;background:#b8b8b8;"></div>
<div style="left:30px;top:522px;width:1227px;height:1px;background:#d4d4d4;"></div>
<div style="left:0px;top:522px;width:29px;height:1px;background:#b8b8b8;"></div>
<div style="left:30px;top:559px;width:1227px;height:1px;background:#d4d4d4;"></div>
<div style="left:0px;top:559px;width:29px;height:1px;background:#b8b8b8;"></div>
<div style="left:30px;top:596px;width:1227px;height:1px;background:#d4d4d4;"></div>
<div style="left:0px;top:596px;width:29px;height:1px;background:#b8b8b8;"></div>
<div style="left:30px;top:633px;width:1227px;height:1px;background:#d4d4d4;"></div>
<div style="left:0px;top:633px;width:29px;height:1px;background:#b8b8b8;"></div>
<div style="left:30px;top:670px;width:1227px;height:1px;background:#d4d4d4;"></div>
<div style="left:0px;top:670px;width:29px;height:1px;background:#b8b8b8;"></div>
<div style="left:30px;top:707px;width:1227px;height:1px;background:#d4d4d4;"></div>
<div style="left:0px;top:707px;width:29px;height:1px;background:#ababab;"></div>
<div style="left:1257px;top:226px;width:1px;height:497px;background:#ababab;"></div>
<div style="left:0px;top:722px;width:1261px;height:1px;background:#ababab;"></div>
<div class="t" style="left:0px;top:249px;width:29px;font-size:16px;line-height:15px;color:#217346;text-align:center">1</div>
<div class="t" style="left:0px;top:286px;width:29px;font-size:16px;line-height:15px;color:#217346;text-align:center">2</div>
<div class="t" style="left:0px;top:323px;width:29px;font-size:16px;line-height:15px;color:#217346;text-align:center">3</div>
<div class="t" style="left:0px;top:360px;width:29px;font-size:16px;line-height:15px;color:#217346;text-align:center">4</div>
<div class="t" style="left:0px;top:397px;width:29px;font-size:16px;line-height:15px;color:#217346;text-align:center">5</div>
<div class="t" style="left:0px;top:434px;width:29px;font-size:16px;line-height:15px;color:#217346;text-align:center">6</div>
<div class="t" style="left:0px;top:471px;width:29px;font-size:16px;line-height:15px;color:#217346;text-align:center">7</div>
<div class="t" style="left:0px;top:508px;width:29px;font-size:16px;line-height:15px;color:#217346;text-align:center">8</div>
<div class="t" style="left:0px;top:545px;width:29px;font-size:16px;line-height:15px;color:#217346;text-align:center">9</div>
<div class="t" style="left:0px;top:582px;width:29px;font-size:16px;line-height:15px;color:#217346;text-align:center">10</div>
<div class="t" style="left:0px;top:619px;width:29px;font-size:16px;line-height:15px;color:#217346;text-align:center">11</div>
<div class="t" style="left:0px;top:656px;width:29px;font-size:16px;line-height:15px;color:#217346;text-align:center">12</div>
<div class="t" style="left:0px;top:693px;width:29px;font-size:16px;line-height:15px;color:#217346;text-align:center">13</div>
<div class="t" style="left:0px;top:730px;width:29px;font-size:16px;line-height:15px;color:#262626;text-align:center">14</div>
<div style="left:0px;top:708px;width:29px;height:14px;background:#e6e6e6;"></div>
<div class="t" style="left:0px;top:709px;width:29px;font-size:16px;line-height:15px;color:#262626;text-align:center;height:10px;overflow:hidden;padding-top:3px">14</div>
<div style="left:29px;top:708px;width:1px;height:14px;background:#ababab;"></div>
<div style="left:28px;top:226px;width:2px;height:482px;background:#217346;"></div>
<div style="left:261px;top:263px;width:112px;height:443px;background:#c6c6c6;"></div>
<div style="left:261px;top:300px;width:112px;height:1px;background:#a6a6a6;"></div>
<div style="left:261px;top:337px;width:112px;height:1px;background:#a6a6a6;"></div>
<div style="left:261px;top:374px;width:112px;height:1px;background:#a6a6a6;"></div>
<div style="left:261px;top:411px;width:112px;height:1px;background:#a6a6a6;"></div>
<div style="left:261px;top:448px;width:112px;height:1px;background:#a6a6a6;"></div>
<div style="left:261px;top:485px;width:112px;height:1px;background:#a6a6a6;"></div>
<div style="left:261px;top:522px;width:112px;height:1px;background:#a6a6a6;"></div>
<div style="left:261px;top:559px;width:112px;height:1px;background:#a6a6a6;"></div>
<div style="left:261px;top:596px;width:112px;height:1px;background:#a6a6a6;"></div>
<div style="left:261px;top:633px;width:112px;height:1px;background:#a6a6a6;"></div>
<div style="left:261px;top:670px;width:112px;height:1px;background:#a6a6a6;"></div>
<div style="left:261px;top:263px;width:112px;height:1px;background:#a6a6a6;"></div>
<div style="left:258px;top:225px;width:2px;height:484px;background:#217346;"></div>
<div style="left:374px;top:225px;width:2px;height:480px;background:#217346;"></div>
<div style="left:258px;top:225px;width:118px;height:2px;background:#217346;"></div>
<div style="left:258px;top:707px;width:113px;height:2px;background:#217346;"></div>
<div style="left:371px;top:704px;width:7px;height:7px;background:#fff;"></div>
<div style="left:372px;top:705px;width:5px;height:5px;background:#217346;"></div>
<div class="t m" style="left:30px;top:240px;width:114px;text-align:center"><span class="sx">1</span><span class="cj">月</span></div>
<div class="t m" style="left:145px;top:240px;width:114px;text-align:center"><span class="sx">2</span><span class="cj">月</span></div>
<div class="t m" style="left:30px;top:277px;width:114px;text-align:center"><span class="sx">10</span></div>
<div class="t m" style="left:145px;top:277px;width:114px;text-align:center"><span class="sx">20</span></div>
<div class="t m" style="left:30px;top:314px;width:114px;text-align:center"><span class="sx">15</span></div>
<div class="t m" style="left:145px;top:314px;width:114px;text-align:center"><span class="sx">15</span></div>
<div class="t" style="left:262px;top:313px;width:110px;text-align:right;font-size:15px;line-height:16px;color:#262626">15</div>
<svg style="left:261px;top:301px;" width="6" height="6" viewBox="0 0 6 6"><path d="M0 0 H5.5 L0 5.5 Z" fill="#006a10"/></svg>
<div class="t m" style="left:30px;top:351px;width:114px;text-align:center"><span class="sx">17</span></div>
<div class="t m" style="left:145px;top:351px;width:114px;text-align:center"><span class="sx">18</span></div>
<svg style="left:261px;top:338px;" width="6" height="6" viewBox="0 0 6 6"><path d="M0 0 H5.5 L0 5.5 Z" fill="#006a10"/></svg>
<div class="t m" style="left:30px;top:388px;width:114px;text-align:center"><span class="sx">23</span></div>
<div class="t m" style="left:145px;top:388px;width:114px;text-align:center"><span class="sx">40</span></div>
<div class="t" style="left:262px;top:387px;width:110px;text-align:right;font-size:15px;line-height:16px;color:#262626">23</div>
<svg style="left:261px;top:375px;" width="6" height="6" viewBox="0 0 6 6"><path d="M0 0 H5.5 L0 5.5 Z" fill="#006a10"/></svg>
<div class="t m" style="left:30px;top:425px;width:114px;text-align:center"><span class="sx">24</span></div>
<div class="t m" style="left:145px;top:425px;width:114px;text-align:center"><span class="sx">31</span></div>
<div class="t" style="left:262px;top:424px;width:110px;text-align:right;font-size:15px;line-height:16px;color:#262626">24</div>
<svg style="left:261px;top:412px;" width="6" height="6" viewBox="0 0 6 6"><path d="M0 0 H5.5 L0 5.5 Z" fill="#006a10"/></svg>
<div class="t m" style="left:30px;top:462px;width:114px;text-align:center"><span class="sx">25</span></div>
<div class="t m" style="left:145px;top:462px;width:114px;text-align:center"><span class="sx">20</span></div>
<svg style="left:261px;top:449px;" width="6" height="6" viewBox="0 0 6 6"><path d="M0 0 H5.5 L0 5.5 Z" fill="#006a10"/></svg>
<div class="t m" style="left:30px;top:499px;width:114px;text-align:center"><span class="sx">26</span></div>
<div class="t m" style="left:145px;top:499px;width:114px;text-align:center"><span class="sx">24</span></div>
<div class="t" style="left:262px;top:498px;width:110px;text-align:right;font-size:15px;line-height:16px;color:#262626">26</div>
<svg style="left:261px;top:486px;" width="6" height="6" viewBox="0 0 6 6"><path d="M0 0 H5.5 L0 5.5 Z" fill="#006a10"/></svg>
<div class="t m" style="left:30px;top:536px;width:114px;text-align:center"><span class="sx">31</span></div>
<div class="t m" style="left:145px;top:536px;width:114px;text-align:center"><span class="sx">23</span></div>
<svg style="left:261px;top:523px;" width="6" height="6" viewBox="0 0 6 6"><path d="M0 0 H5.5 L0 5.5 Z" fill="#006a10"/></svg>
<div class="t m" style="left:30px;top:573px;width:114px;text-align:center"><span class="sx">33</span></div>
<div class="t m" style="left:145px;top:573px;width:114px;text-align:center"><span class="sx">26</span></div>
<div class="t" style="left:262px;top:572px;width:110px;text-align:right;font-size:15px;line-height:16px;color:#262626">33</div>
<svg style="left:261px;top:560px;" width="6" height="6" viewBox="0 0 6 6"><path d="M0 0 H5.5 L0 5.5 Z" fill="#006a10"/></svg>
<div class="t m" style="left:30px;top:610px;width:114px;text-align:center"><span class="sx">35</span></div>
<div class="t m" style="left:145px;top:610px;width:114px;text-align:center"><span class="sx">33</span></div>
<svg style="left:261px;top:597px;" width="6" height="6" viewBox="0 0 6 6"><path d="M0 0 H5.5 L0 5.5 Z" fill="#006a10"/></svg>
<div class="t m" style="left:30px;top:647px;width:114px;text-align:center"><span class="sx">38</span></div>
<div class="t m" style="left:145px;top:647px;width:114px;text-align:center"><span class="sx">36</span></div>
<div class="t" style="left:262px;top:646px;width:110px;text-align:right;font-size:15px;line-height:16px;color:#262626">38</div>
<svg style="left:261px;top:634px;" width="6" height="6" viewBox="0 0 6 6"><path d="M0 0 H5.5 L0 5.5 Z" fill="#006a10"/></svg>
<div class="t m" style="left:30px;top:684px;width:114px;text-align:center"><span class="sx">40</span></div>
<div class="t m" style="left:145px;top:684px;width:114px;text-align:center"><span class="sx">38</span></div>
<svg style="left:261px;top:671px;" width="6" height="6" viewBox="0 0 6 6"><path d="M0 0 H5.5 L0 5.5 Z" fill="#006a10"/></svg>
<div style="left:376px;top:688px;width:20px;height:20px;background:#fff;border:1px solid #b8b8b8;box-sizing:border-box;"></div>
<svg style="left:378px;top:690px;" width="17" height="17" viewBox="0 0 17 17"><rect x="2" y="2" width="6" height="4" fill="#3c7df0"/><rect x="1.5" y="1.5" width="12" height="5" fill="none" stroke="#777"/><line x1="8" y1="1.5" x2="8" y2="6.5" stroke="#777"/><rect x="1.5" y="6.5" width="6.5" height="5" fill="none" stroke="#777"/><path d="M1 13.5 H9" stroke="#777" stroke-dasharray="1 1"/><path d="M10 11.5 H15 M12.5 9 V14" stroke="#777"/></svg>
<div style="left:1258px;top:208px;width:21px;height:515px;background:#e6e6e6;"></div>
<div style="left:1261px;top:210px;width:15px;height:15px;background:#fff;border:1px solid #ababab;box-sizing:border-box;"></div>
<svg style="left:1264px;top:214px;" width="9" height="6" viewBox="0 0 9 6"><path d="M0 5 H9 L4.5 0.5 Z" fill="#222"/></svg>
<div style="left:1261px;top:225px;width:15px;height:386px;background:#fff;border:1px solid #ababab;box-sizing:border-box;"></div>
<div style="left:1261px;top:611px;width:15px;height:97px;background:#f0f0f0;"></div>
<div style="left:1261px;top:708px;width:15px;height:15px;background:#fff;border:1px solid #ababab;box-sizing:border-box;"></div>
<svg style="left:1264px;top:713px;" width="9" height="6" viewBox="0 0 9 6"><path d="M0 0.5 H9 L4.5 5 Z" fill="#222"/></svg>
<div style="left:0px;top:723px;width:1280px;height:27px;background:#e6e6e6;"></div>
<svg style="left:26px;top:731px;" width="8" height="9" viewBox="0 0 8 9"><path d="M6 0.5 V8.5 L1.5 4.5 Z" fill="#bdbdbd"/></svg>
<svg style="left:56px;top:731px;" width="8" height="9" viewBox="0 0 8 9"><path d="M1.5 0.5 V8.5 L6 4.5 Z" fill="#bdbdbd"/></svg>
<div style="left:101px;top:722px;width:69px;height:25px;background:#fff;border:1px solid #ababab;border-top:none;box-sizing:border-box;"></div>
<div style="left:101px;top:745px;width:69px;height:2px;background:#217346;"></div>
<div class="t" style="left:114px;top:727px;font-size:13.5px;line-height:15px;color:#217346;">Sheet1</div>
<svg style="left:202px;top:727px;" width="18" height="18" viewBox="0 0 18 18"><circle cx="9" cy="9" r="7.5" fill="none" stroke="#c4c4c4" stroke-width="1.2"/><path d="M9 5 V13 M5 9 H13" stroke="#c4c4c4" stroke-width="1.6"/></svg>
<div style="left:768px;top:731px;width:2px;height:2px;background:#b0b0b0;"></div>
<div style="left:768px;top:735px;width:2px;height:2px;background:#b0b0b0;"></div>
<div style="left:768px;top:739px;width:2px;height:2px;background:#b0b0b0;"></div>
<div style="left:785px;top:729px;width:472px;height:15px;background:#f0f0f0;"></div>
<div style="left:785px;top:729px;width:15px;height:15px;background:#fff;border:1px solid #ababab;box-sizing:border-box;"></div>
<svg style="left:789px;top:732px;" width="6" height="9" viewBox="0 0 6 9"><path d="M5 0 V9 L0.5 4.5 Z" fill="#222"/></svg>
<div style="left:800px;top:729px;width:408px;height:15px;background:#fff;border:1px solid #ababab;box-sizing:border-box;"></div>
<div style="left:1243px;top:729px;width:15px;height:15px;background:#fff;border:1px solid #ababab;box-sizing:border-box;"></div>
<svg style="left:1248px;top:732px;" width="6" height="9" viewBox="0 0 6 9"><path d="M0.5 0 V9 L5 4.5 Z" fill="#222"/></svg>
<div style="left:0px;top:750px;width:1280px;height:1px;background:#d6d6d6;"></div>
<div style="left:0px;top:751px;width:1280px;height:21px;background:#f3f3f3;"></div>
<div class="t" style="left:13px;top:756px;font-size:12px;line-height:12px;color:#444;">就绪</div>
<svg style="left:55px;top:753px;" width="16" height="15" viewBox="0 0 16 15"><circle cx="3.5" cy="3.2" r="2.7" fill="#555"/><rect x="6.5" y="1.5" width="7.5" height="3" fill="#555"/><path d="M2.5 7 V13.5 H14 V5" fill="none" stroke="#555"/><path d="M4 7.5 H13 M4 9.8 H13 M4 12 H13" stroke="#666" stroke-dasharray="1.2 0.9"/></svg>
<svg style="left:86px;top:754px;" width="18" height="16" viewBox="0 0 18 16"><path d="M5.5 3 A6 6 0 1 0 12.5 11" fill="none" stroke="#555" stroke-width="1.3" stroke-dasharray="2.4 1.3"/><path d="M8.5 0.5 V6 M6.3 3.8 L8.5 6 L10.7 3.8" fill="none" stroke="#555" stroke-width="1.2"/><path d="M13.5 2.5 L15 4 M11 10.5 L13 13 L17 8" fill="none" stroke="#444" stroke-width="1.6"/></svg>
<div class="t" style="left:106px;top:756px;font-size:12px;line-height:12px;color:#444;">辅助功能: 一切就绪</div>
<div class="t" style="left:748px;top:755px;font-size:12px;line-height:12px;color:#444;">平均值: 26.5</div>
<div class="t" style="left:831px;top:755px;font-size:12px;line-height:12px;color:#444;">计数: 13</div>
<div class="t" style="left:892px;top:755px;font-size:12px;line-height:12px;color:#444;">求和: 159</div>
<div style="left:963px;top:751px;width:40px;height:21px;background:#c6c6c6;"></div>
<svg style="left:975px;top:754px;" width="15" height="14" viewBox="0 0 15 14"><rect x="0.5" y="0.5" width="13" height="12" fill="none" stroke="#666"/><path d="M0.5 4.5 H13.5 M0.5 8.5 H13.5 M4.8 0.5 V12.5 M9.2 0.5 V12.5" stroke="#666"/></svg>
<svg style="left:1015px;top:754px;" width="16" height="14" viewBox="0 0 16 14"><rect x="0.5" y="0.5" width="14" height="12.5" fill="none" stroke="#777"/><rect x="3.5" y="3" width="8" height="7.5" fill="none" stroke="#777"/><path d="M5 5 H10 M5 6.8 H10 M5 8.6 H10" stroke="#777"/></svg>
<svg style="left:1055px;top:754px;" width="16" height="14" viewBox="0 0 16 14"><path d="M0.5 0.5 V13 H14.5 V0.5 M4.5 0.5 V8 H10.5 V0.5 M7.5 0.5 V8" fill="none" stroke="#777"/><path d="M0.5 0.5 H14.5" stroke="#777"/></svg>
<div style="left:1089px;top:760px;width:8px;height:1px;background:#444;"></div>
<div style="left:1102px;top:761px;width:100px;height:1px;background:#444;"></div>
<div style="left:1150px;top:756px;width:6px;height:11px;background:#444;"></div>
<div style="left:1206px;top:761px;width:9px;height:1px;background:#444;"></div>
<div style="left:1210px;top:757px;width:1px;height:9px;background:#444;"></div>
<div class="t" style="left:1228px;top:754px;font-size:12.6px;line-height:13px;color:#444;">100%</div>
<div style="left:0px;top:65px;width:1px;height:708px;background:#217346;"></div>
<div style="left:1279px;top:65px;width:1px;height:708px;background:#217346;"></div>
<div style="left:0px;top:772px;width:1280px;height:1px;background:#217346;"></div>
</body></html>
